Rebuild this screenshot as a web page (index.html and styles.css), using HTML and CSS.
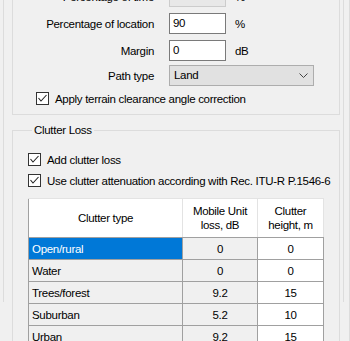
FILE: index.html
```html
<!DOCTYPE html>
<html lang="en">
<head>
  <meta charset="UTF-8">
  <title>Propagation settings</title>
  <link rel="stylesheet" href="styles.css">
</head>
<body>
  <div class="window">
    <div class="panel">

      <div class="group group-params">
        <div class="field-row row-time">
          <span class="field-label">Percentage of time</span>
          <span class="textbox disabled">50</span>
          <span class="unit">%</span>
        </div>
        <div class="field-row row-location">
          <span class="field-label label-wide">Percentage of location</span>
          <span class="textbox">90</span>
          <span class="unit">%</span>
        </div>
        <div class="field-row row-margin">
          <span class="field-label">Margin</span>
          <span class="textbox">0</span>
          <span class="unit">dB</span>
        </div>
        <div class="field-row row-path">
          <span class="field-label">Path type</span>
          <span class="combo">
            <span>Land</span>
            <svg width="9" height="5" viewBox="0 0 9 5"><polyline points="0.5,0.5 4.5,4.5 8.5,0.5" fill="none" stroke="#444" stroke-width="1"/></svg>
          </span>
        </div>
        <label class="check check-terrain">
          <span class="check-box"><svg width="11" height="11" viewBox="0 0 11 11"><polyline points="1.5,5 4,8 9.5,2" fill="none" stroke="#222" stroke-width="1.1"/></svg></span>
          <span>Apply terrain clearance angle correction</span>
        </label>
      </div>

      <fieldset class="group group-clutter">
        <legend>Clutter Loss</legend>
        <label class="check check-add">
          <span class="check-box"><svg width="11" height="11" viewBox="0 0 11 11"><polyline points="1.5,5 4,8 9.5,2" fill="none" stroke="#222" stroke-width="1.1"/></svg></span>
          <span>Add clutter loss</span>
        </label>
        <label class="check check-itu">
          <span class="check-box"><svg width="11" height="11" viewBox="0 0 11 11"><polyline points="1.5,5 4,8 9.5,2" fill="none" stroke="#222" stroke-width="1.1"/></svg></span>
          <span>Use clutter attenuation according with Rec. ITU-R P.1546-6</span>
        </label>

        <table class="grid">
          <thead>
            <tr>
              <th class="col-type">Clutter type</th>
              <th class="col-loss">Mobile Unit<br>loss, dB</th>
              <th class="col-height">Clutter<br>height, m</th>
            </tr>
          </thead>
          <tbody>
            <tr>
              <td class="cell-name selected">Open/rural</td>
              <td class="cell-ro">0</td>
              <td>0</td>
            </tr>
            <tr>
              <td class="cell-name">Water</td>
              <td class="cell-ro">0</td>
              <td>0</td>
            </tr>
            <tr>
              <td class="cell-name">Trees/forest</td>
              <td class="cell-ro">9.2</td>
              <td>15</td>
            </tr>
            <tr>
              <td class="cell-name">Suburban</td>
              <td class="cell-ro">5.2</td>
              <td>10</td>
            </tr>
            <tr>
              <td class="cell-name">Urban</td>
              <td class="cell-ro">9.2</td>
              <td>15</td>
            </tr>
          </tbody>
        </table>
      </fieldset>

    </div>
  </div>
</body>
</html>
```

FILE: styles.css
```css
body, html {
  margin: 0; padding: 0;
  background: #f0f0f0;
  font-family: 'Liberation Sans', Arial, sans-serif;
  font-size: 11.5px;
  letter-spacing: -0.3px;
  color: #000;
  overflow: hidden;
}
.window {
  width: 349px; height: 341px;
  border-right: 1px solid #dcdcdc;
  overflow: hidden;
}
.panel {
  margin-left: 3px;
  width: 341px; height: 100%;
  border-left: 1px solid #dcdcdc;
  border-right: 1px solid #dcdcdc;
  padding: 0 3px 0 8px;
  box-sizing: border-box;
}

/* group boxes */
.group {
  border: 1px solid #dcdcdc;
  box-sizing: border-box;
  width: 328px;
}
.group-params {
  margin-top: -39px;
  padding: 24px 0 9px 0;
}
.field-row {
  display: flex;
  align-items: center;
  height: 21px;
  margin-bottom: 6px;
}
.field-row.row-margin { margin-bottom: 4px; }
.field-label {
  width: 141px;
  text-align: right;
  white-space: nowrap;
}
.field-label.label-wide { margin-right: -4px; padding-right: 4px; }
.textbox, .combo {
  margin-left: 15px;
  height: 21px;
  box-sizing: border-box;
  border: 1px solid #7a7a7a;
  background: #fff;
  padding: 0 3px;
  line-height: 19px;
}
.textbox { width: 57px; }
.textbox.disabled {
  background: #e8e8e8;
  border-color: #cccccc;
  color: #6d6d6d;
}
.unit { margin-left: 9px; }
.combo {
  width: 145px;
  background: #e1e1e1;
  border-color: #adadad;
  display: flex;
  align-items: center;
  justify-content: space-between;
  padding: 0 5px 0 4px;
}

/* checkboxes */
.check {
  display: flex;
  align-items: center;
  height: 13px;
  white-space: nowrap;
}
.check-box {
  width: 13px; height: 13px;
  box-sizing: border-box;
  border: 1px solid #333;
  background: #fff;
  margin-right: 6px;
  display: flex;
  align-items: center;
  justify-content: center;
}
.check-terrain { margin: 3px 0 0 23px; }

/* clutter group */
.group-clutter {
  margin: 8px 0 0 0;
  padding: 0 0 0 15px;
  min-width: 0;
}
.group-clutter legend {
  margin-left: 4px;
  padding: 0 2px;
  line-height: 15px;
}
.check-add { margin-top: 15px; }
.check-itu { margin-top: 8px; }

/* data grid */
.grid {
  margin-top: 11px;
  border-collapse: collapse;
  table-layout: fixed;
  width: 296px;
}
.grid th {
  background: #fff;
  font-weight: normal;
  height: 38px;
  padding: 0;
  border: 1px solid #e3e3e3;
  border-bottom: 1px solid #a0a0a0;
  line-height: 14px;
  text-align: center;
}
.grid th.col-type { width: 153px; border-left-color: #a0a0a0; }
.grid th.col-loss { width: 74px; }
.grid td {
  height: 21px;
  padding: 0;
  border: 1px solid #a0a0a0;
  background: #fff;
  text-align: center;
}
.grid td.cell-name {
  text-align: left;
  padding-left: 3px;
  background: #f0f0f0;
}
.grid td.cell-ro { background: #f0f0f0; }
.grid td.selected {
  background: #0078d7;
  color: #fff;
}
```
